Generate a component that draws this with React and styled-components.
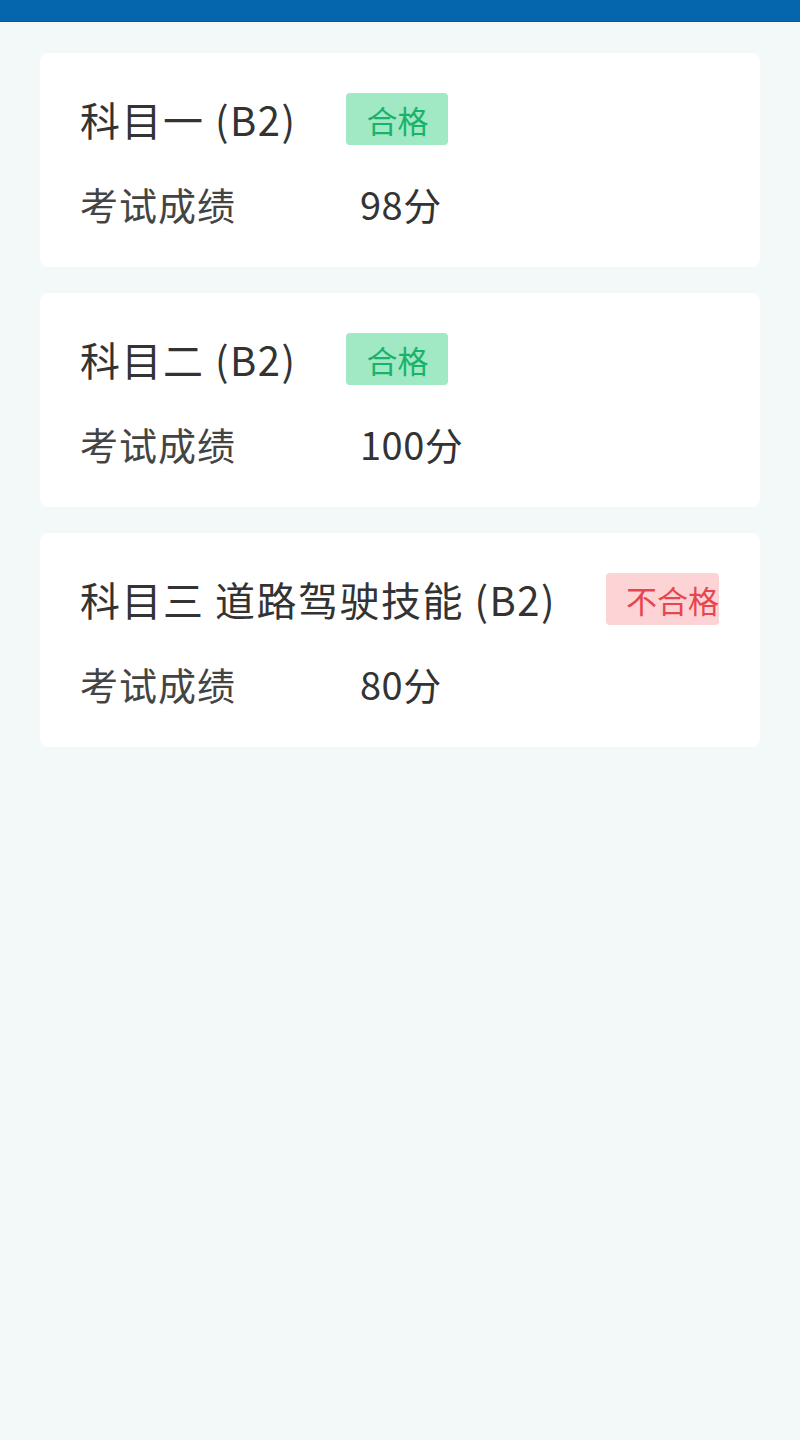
import React from 'react'
import styled, { createGlobalStyle } from 'styled-components'

const GlobalStyle = createGlobalStyle`
  html, body {
    margin: 0;
    padding: 0;
    background: #f2f9f8;
    font-family: "Noto Sans CJK SC", "Noto Sans", sans-serif;
  }
`

const Page = styled.div`
  min-height: 1440px;
  background: #f2f9f8;
`

const TopBar = styled.div`
  height: 22px;
  background: #0566ae;
  border-bottom: 1px solid #0a5a96;
  box-sizing: border-box;
`

const List = styled.div`
  display: flex;
  flex-direction: column;
  gap: 26px;
  padding: 31px 40px;
`

const Card = styled.div`
  background: #ffffff;
  border-radius: 8px;
  padding: 40px 40px 36px;
  box-sizing: border-box;
  height: 214px;
`

const TitleRow = styled.div`
  display: flex;
  align-items: center;
  height: 52px;
`

const Title = styled.div`
  font-size: 40px;
  color: #333333;
  white-space: nowrap;
  flex-shrink: 0;
  letter-spacing: 1.5px;
`

const Badge = styled.div`
  margin-left: 50px;
  height: 52px;
  display: flex;
  align-items: center;
  padding: 0 20px;
  border-radius: 4px;
  font-size: 31px;
  white-space: nowrap;
  min-width: 0;
  box-sizing: border-box;
  background: ${({ pass }) => (pass ? '#a1e8c5' : '#fdd3d6')};
  color: ${({ pass }) => (pass ? '#18b36a' : '#e6474e')};
  padding-right: ${({ pass }) => (pass ? '20px' : '0')};
`

const ScoreRow = styled.div`
  display: flex;
  align-items: center;
  margin-top: 32px;
  height: 52px;
  font-size: 38px;
  letter-spacing: 1px;
  color: #444444;
`

const Label = styled.div`
  width: 280px;
`

const Value = styled.div`
  color: #333333;
  letter-spacing: 0.5px;
`

const subjects = [
  { id: 1, name: '科目一 (B2)', pass: true, score: 98 },
  { id: 2, name: '科目二 (B2)', pass: true, score: 100 },
  { id: 3, name: '科目三 道路驾驶技能 (B2)', pass: false, score: 80 },
]

function App() {
  return (
    <Page>
      <GlobalStyle />
      <TopBar />
      <List>
        {subjects.map(s => (
          <Card key={s.id}>
            <TitleRow>
              <Title>{s.name}</Title>
              <Badge pass={s.pass}>{s.pass ? '合格' : '不合格'}</Badge>
            </TitleRow>
            <ScoreRow>
              <Label>考试成绩</Label>
              <Value>{s.score}分</Value>
            </ScoreRow>
          </Card>
        ))}
      </List>
    </Page>
  )
}

export default App
